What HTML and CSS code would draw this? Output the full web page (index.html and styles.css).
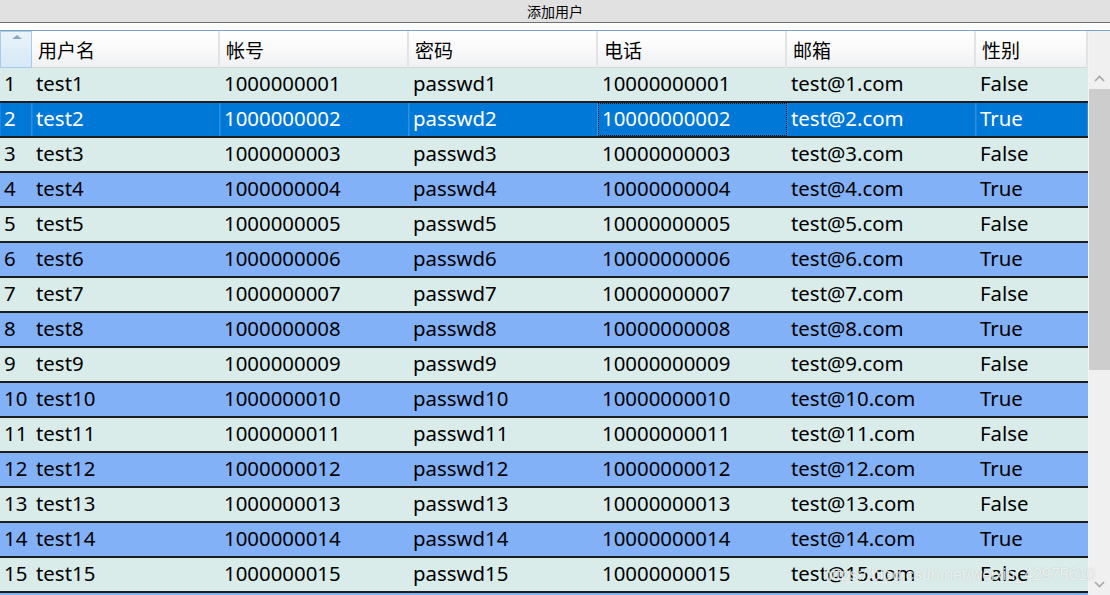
FILE: index.html
```html
<!DOCTYPE html>
<html>
<head>
<meta charset="utf-8">
<link rel="stylesheet" href="styles.css">
</head>
<body>
<div class="window">
  <div class="topbar"><span class="btn-label">添加用户</span></div>
  <div class="gap"></div>
  <div class="table-frame">
    <div class="table">
      <div class="header">
        <div class="corner"><span class="sort-tri"></span></div>
        <div class="hcell">用户名</div>
        <div class="hcell">帐号</div>
        <div class="hcell">密码</div>
        <div class="hcell">电话</div>
        <div class="hcell">邮箱</div>
        <div class="hcell">性别</div>
      </div>
      <div class="body" id="tbody"></div>
      <div class="row row-blue row-partial"></div>
    </div>
    <div class="vscroll">
      <div class="vs-top"></div>
      <div class="vs-btn"><svg width="11" height="7" viewBox="0 0 11 7"><path d="M1 6 L5.5 1.5 L10 6" fill="none" stroke="#a6a6a6" stroke-width="1.6"/></svg></div>
      <div class="vs-track">
        <div class="vs-thumb"></div>
      </div>
      <div class="vs-btn"><svg width="11" height="7" viewBox="0 0 11 7"><path d="M1 1 L5.5 5.5 L10 1" fill="none" stroke="#a6a6a6" stroke-width="1.6"/></svg></div>
    </div>
    <div class="watermark">https://blog.csdn.net/weixin_42975610</div>
  </div>
</div>
<script>
(function(){
  var body = document.getElementById('tbody');
  var html = '';
  for (var i = 1; i <= 15; i++) {
    var cls = 'row ' + (i % 2 === 0 ? 'row-blue' : 'row-light');
    if (i === 2) cls = 'row row-sel';
    var acct = '10000000' + (i < 10 ? '0' + i : '' + i);
    var phone = '100000000' + (i < 10 ? '0' + i : '' + i);
    var cells = [
      String(i),
      'test' + i,
      acct,
      'passwd' + i,
      phone,
      'test@' + i + '.com',
      i % 2 === 0 ? 'True' : 'False'
    ];
    html += '<div class="' + cls + '">';
    for (var c = 0; c < cells.length; c++) {
      var cc = 'cell' + (c === 0 ? ' num' : '');
      if (i === 2 && c === 4) cc += ' focus';
      html += '<div class="' + cc + '">' + cells[c] + '</div>';
    }
    html += '</div>';
  }
  body.innerHTML = html;
})();
</script>
</body>
</html>
```

FILE: styles.css
```css
html, body {
  margin: 0;
  padding: 0;
  background: #ffffff;
}
body {
  font-family: "Noto Sans", "Noto Sans CJK SC", sans-serif;
  color: #000;
  overflow: hidden;
}
.window {
  width: 1110px;
  height: 595px;
  display: flex;
  flex-direction: column;
  overflow: hidden;
  position: relative;
}
.topbar {
  height: 22px;
  background: #e1e1e1;
  border-bottom: 1px solid #707070;
  display: flex;
  align-items: center;
  justify-content: center;
  flex-shrink: 0;
}
.btn-label {
  font-family: "Noto Sans CJK SC", sans-serif;
  font-size: 14px;
  line-height: 20px;
  color: #000;
}
.gap {
  height: 7px;
  flex-shrink: 0;
  background: #fff;
}
.table-frame {
  flex: 1;
  display: flex;
  border-top: 1px solid #7ea0c6;
  overflow: hidden;
  position: relative;
}
.table {
  width: 1088px;
  flex-shrink: 0;
  display: flex;
  flex-direction: column;
  overflow: hidden;
}
.header,
.row {
  display: grid;
  grid-template-columns: 32px 188px 189px 189px 189px 189px 112px;
}
.header {
  height: 37px;
  flex-shrink: 0;
  background: linear-gradient(#ffffff 0%, #fbfbfc 40%, #eff0f2 100%);
  border-bottom: 1px solid #d4d4d4;
  box-sizing: border-box;
}
.corner {
  position: relative;
  background: linear-gradient(#eaf3fb, #d6e8f6);
  border: 1px solid #a9cbe9;
  box-sizing: border-box;
  height: 37px;
}
.sort-tri {
  position: absolute;
  left: 11px;
  top: 3px;
  width: 0;
  height: 0;
  border-left: 5px solid transparent;
  border-right: 5px solid transparent;
  border-bottom: 4px solid #8ea7c0;
}
.hcell {
  font-family: "Noto Sans CJK SC", sans-serif;
  font-size: 19px;
  line-height: 37px;
  padding-left: 6px;
  box-sizing: border-box;
  border-right: 2px solid #e2e3e5;
  white-space: nowrap;
  overflow: hidden;
}
.body {
  display: flex;
  flex-direction: column;
  flex-shrink: 0;
}
.row {
  height: 35px;
  flex-shrink: 0;
  box-sizing: border-box;
  border-bottom: 2px solid #1c1c1c;
}
.row-partial {
  border-bottom: none;
}
.row-light {
  background: #d9ecea;
}
.row-blue {
  background: #82b1f8;
}
.row-sel {
  background: #0078d7;
  color: #ffffff;
}
.row-sel .cell {
  box-shadow: inset -1px 0 0 #2b8fe2, inset 1px 0 0 #1b84dd;
}
.cell {
  font-size: 20.4px;
  line-height: 30px;
  height: 33px;
  padding-left: 4px;
  white-space: nowrap;
  overflow: hidden;
  box-sizing: border-box;
}
.cell.num {
  padding-left: 4px;
}
.row-sel .cell.focus {
  box-shadow: none;
  border: 1px dotted #111;
  line-height: 28px;
  padding-left: 3px;
}
.vscroll {
  flex: 1;
  display: flex;
  flex-direction: column;
  background: #f0f0f0;
  border-left: 1px solid #f4f4f4;
}
.vs-top {
  height: 37px;
  flex-shrink: 0;
}
.vs-btn {
  height: 21px;
  flex-shrink: 0;
  display: flex;
  align-items: center;
  justify-content: center;
}
.vs-track {
  flex: 1;
}
.vs-thumb {
  height: 281px;
  background: #cdcdcd;
}
.watermark {
  position: absolute;
  left: 823px;
  top: 535px;
  font-family: "Liberation Sans", Arial, sans-serif;
  font-size: 16px;
  color: rgba(255, 255, 255, 0.8);
  text-shadow: 0 0 1px rgba(80, 80, 80, 0.35);
  white-space: nowrap;
  pointer-events: none;
}
```
